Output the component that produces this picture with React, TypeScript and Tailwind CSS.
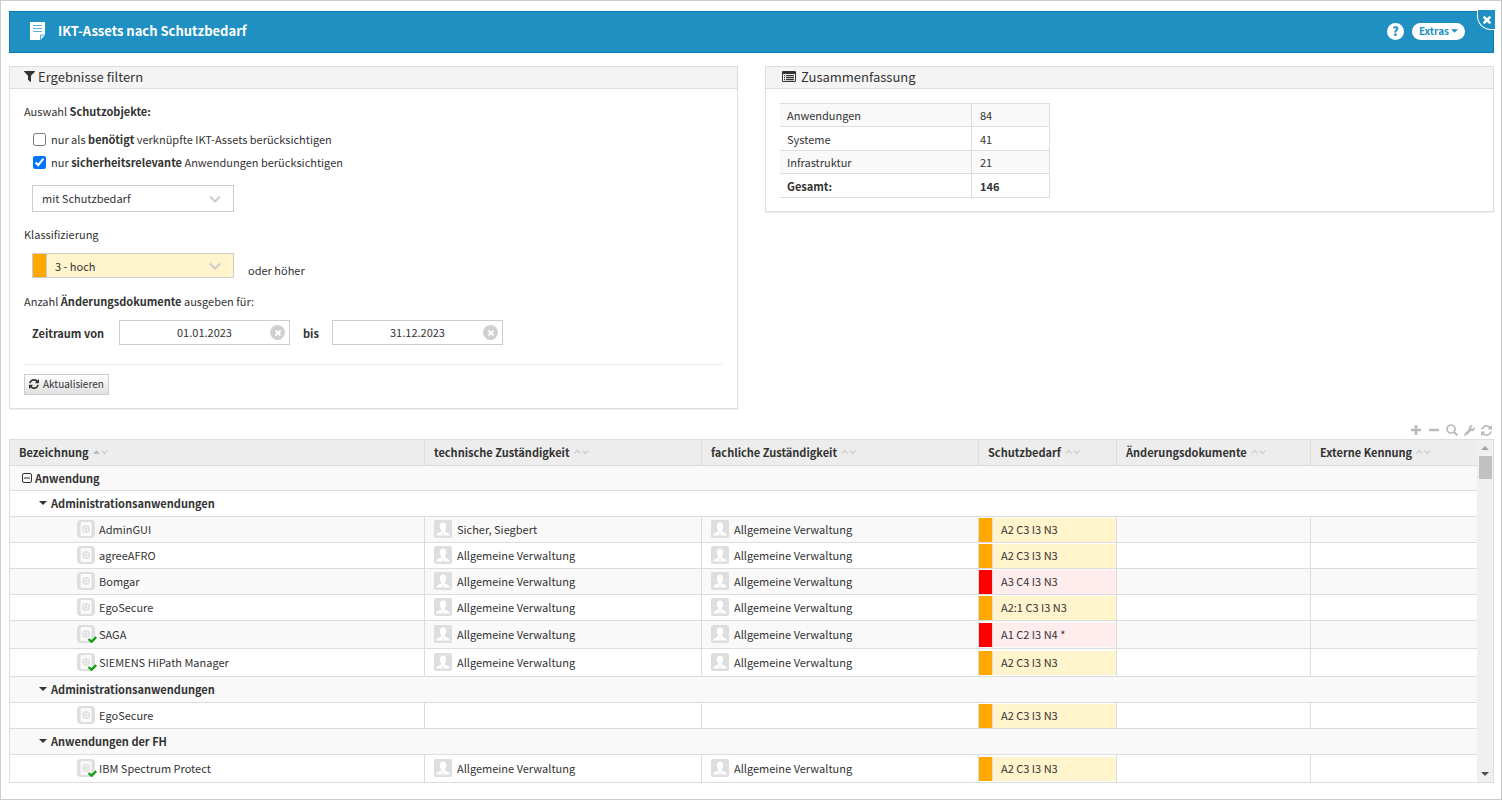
import React, { useState } from "react";
import { FaWrench } from "react-icons/fa";

type Level = "hoch" | "sehrHoch";

interface AssetRow {
  kind: "category" | "group" | "item";
  name: string;
  checked?: boolean;
  technical?: string;
  business?: string;
  need?: string;
  level?: Level;
}

const columns = [
  "Bezeichnung",
  "technische Zuständigkeit",
  "fachliche Zuständigkeit",
  "Schutzbedarf",
  "Änderungsdokumente",
  "Externe Kennung",
];

const AV = "Allgemeine Verwaltung";

const rows: AssetRow[] = [
  { kind: "category", name: "Anwendung" },
  { kind: "group", name: "Administrationsanwendungen" },
  { kind: "item", name: "AdminGUI", technical: "Sicher, Siegbert", business: AV, need: "A2 C3 I3 N3", level: "hoch" },
  { kind: "item", name: "agreeAFRO", technical: AV, business: AV, need: "A2 C3 I3 N3", level: "hoch" },
  { kind: "item", name: "Bomgar", technical: AV, business: AV, need: "A3 C4 I3 N3", level: "sehrHoch" },
  { kind: "item", name: "EgoSecure", technical: AV, business: AV, need: "A2:1 C3 I3 N3", level: "hoch" },
  { kind: "item", name: "SAGA", checked: true, technical: AV, business: AV, need: "A1 C2 I3 N4 *", level: "sehrHoch" },
  { kind: "item", name: "SIEMENS HiPath Manager", checked: true, technical: AV, business: AV, need: "A2 C3 I3 N3", level: "hoch" },
  { kind: "group", name: "Administrationsanwendungen" },
  { kind: "item", name: "EgoSecure", need: "A2 C3 I3 N3", level: "hoch" },
  { kind: "group", name: "Anwendungen der FH" },
  { kind: "item", name: "IBM Spectrum Protect", checked: true, technical: AV, business: AV, need: "A2 C3 I3 N3", level: "hoch" },
];

const summary = [
  ["Anwendungen", "84"],
  ["Systeme", "41"],
  ["Infrastruktur", "21"],
];

interface IconProps {
  className?: string;
}

const PLUS =
  "M1408 608v192q0 40-28 68t-68 28H896v416q0 40-28 68t-68 28H608q-40 0-68-28t-28-68V896H96q-40 0-68-28T0 800V608q0-40 28-68t68-28h416V96q0-40 28-68t68-28h192q40 0 68 28t28 68v416h416q40 0 68 28t28 68z";

const PlusIcon: React.FC<IconProps> = ({ className }) => (
  <svg viewBox="0 0 1408 1408" fill="currentColor" className={className}>
    <path d={PLUS} />
  </svg>
);

const CloseIcon: React.FC<IconProps> = ({ className }) => (
  <svg viewBox="110 110 1188 1188" fill="currentColor" className={className}>
    <path d={PLUS} transform="rotate(45 704 704)" />
  </svg>
);

const MinusIcon: React.FC<IconProps> = ({ className }) => (
  <svg viewBox="0 0 1408 1408" fill="currentColor" className={className}>
    <rect y="512" width="1408" height="384" rx="96" />
  </svg>
);

const RefreshIcon: React.FC<IconProps> = ({ className }) => (
  <svg viewBox="0 0 1536 1536" fill="currentColor" className={className}>
    <path d="M1511 928q0 5-1 7-64 268-268 434.500t-478 166.500q-146 0-282.500-55t-243.500-157l-129 129q-19 19-45 19t-45-19-19-45v-448q0-26 19-45t45-19h448q26 0 45 19t19 45-19 45l-137 137q71 66 161 102t187 36q134 0 250-65t186-179q11-17 53-117 8-23 30-23h192q13 0 22.500 9.500t9.500 22.500zm25-800v448q0 26-19 45t-45 19h-448q-26 0-45-19t-19-45 19-45l138-138q-148-137-349-137-134 0-250 65t-186 179q-11 17-53 117-8 23-30 23h-199q-13 0-22.500-9.500t-9.500-22.500v-7q65-268 270-434.500t480-166.500q146 0 284 55.500t245 156.500l130-129q19-19 45-19t45 19 19 45z" />
  </svg>
);

const SearchIcon: React.FC<IconProps> = ({ className }) => (
  <svg viewBox="0 0 12 12" fill="none" stroke="currentColor" strokeLinecap="round" className={className}>
    <circle cx="5" cy="5" r="4" strokeWidth="1.7" />
    <path d="M8.200 8.200l2.600 2.600" strokeWidth="2.200" />
  </svg>
);

const FilterIcon: React.FC<IconProps> = ({ className }) => (
  <svg viewBox="0 0 1408 1408" fill="currentColor" className={className}>
    <path d="M1403 39q17 41-14 70L896 602v742q0 42-39 59-13 5-25 5-27 0-45-19l-256-256q-19-19-19-45V602L19 109Q-12 80 5 39 22 0 64 0h1280q42 0 59 39z" />
  </svg>
);

const ListIcon: React.FC<IconProps> = ({ className }) => (
  <svg viewBox="0 0 14 11" fill="currentColor" className={className}>
    <path fillRule="evenodd" d="M1.200 0h11.600Q14 0 14 1.200v8.600q0 1.200-1.200 1.200H1.200Q0 11 0 9.800V1.200Q0 0 1.200 0zM1 3v6.700q0 .3.300.3h11.400q.3 0 .3-.3V3z" />
    <path d="M2 4h1v1.200H2zM2 6h1v1.200H2zM2 8h1v1.200H2zM4 4h8v1.200H4zM4 6h8v1.200H4zM4 8h8v1.200H4z" />
  </svg>
);

const NoteIcon: React.FC<IconProps> = ({ className }) => (
  <svg viewBox="0 0 15 18" className={className}>
    <path d="M0 0h15v12.500L10 18H0z" fill="#fff" />
    <path d="M3 3.500h9M3 6.500h9M3 9.500h9" stroke="#5fb0d6" />
    <path d="M15 13h-4.500v5" fill="#e3f1f8" stroke="#5fb0d6" />
  </svg>
);

const ChevronIcon: React.FC<IconProps> = ({ className }) => (
  <svg viewBox="0 0 12 8" fill="none" stroke="currentColor" strokeWidth="2" className={className}>
    <path d="M1 1.500l5 5 5-5" />
  </svg>
);

const CaretIcon: React.FC<IconProps> = ({ className }) => (
  <svg viewBox="0 0 8 4" fill="currentColor" className={className}>
    <path d="M0 0h8L4 4z" />
  </svg>
);

const CollapseIcon: React.FC<IconProps> = ({ className }) => (
  <svg viewBox="0 0 10 10" fill="none" stroke="currentColor" className={className}>
    <rect x="0.500" y="0.500" width="9" height="9" rx="1.500" />
    <path d="M2 5h6" />
  </svg>
);

const SortIcon: React.FC<{ active: boolean }> = ({ active }) => (
  <svg viewBox="0 0 15 6" fill="none" stroke="#cfcfcf" strokeWidth="1.300" className="h-1.5 w-[15px]">
    {active ? <path d="M0 5l3.500-4L7 5z" fill="#bbb" stroke="none" /> : <path d="M.5 4.500l3-3 3 3" />}
    <path d="M8.500 1.500l3 3 3-3" />
  </svg>
);

const AssetIcon: React.FC<{ checked?: boolean }> = ({ checked }) => (
  <svg viewBox="0 0 20 18" className="h-[18px] w-5 shrink-0">
    <rect width="18" height="18" rx="4" fill="#dedede" />
    <rect x="3.500" y="2" width="11" height="14" rx="1.500" fill="#fafafa" />
    <circle cx="9" cy="9" r="4" fill="#e2e2e2" />
    <circle cx="9" cy="9" r="2" fill="#dedede" stroke="#f6f6f6" />
    {checked && <path d="M11.500 14l3 2.700 4.800-4.500" fill="none" stroke="#12a012" strokeWidth="2.300" />}
  </svg>
);

const PersonIcon: React.FC = () => (
  <svg viewBox="0 0 18 18" className="size-[18px] shrink-0">
    <rect width="18" height="18" rx="2" fill="#dedede" />
    <ellipse cx="9" cy="6.500" rx="3.200" ry="4" fill="#fff" />
    <path d="M7.400 9.500h3.200v1.600q.2.900 2.400 1.500 2.600.7 2.800 2.900H2.200q.2-2.200 2.800-2.900 2.200-.6 2.400-1.500z" fill="#fff" />
    <path d="M9 11l-.7 4.500h1.400z" fill="#dedede" />
  </svg>
);

const Panel: React.FC<{ title: string; icon: React.ReactNode; children: React.ReactNode }> = ({ title, icon, children }) => (
  <section className="border border-[#ddd] bg-white shadow-[0_1px_1px_rgba(0,0,0,0.05)]">
    <h2 className="flex h-[22px] items-center border-b border-[#ddd] bg-[#f4f4f4] px-3.5 pb-0.5 text-[13px]">
      {icon}
      {title}
    </h2>
    {children}
  </section>
);

const DateField: React.FC<{ id: string; initial: string }> = ({ id, initial }) => {
  const [value, setValue] = useState(initial);
  return (
    <div className="relative">
      <input
        id={id}
        type="text"
        value={value}
        onChange={(e) => setValue(e.target.value)}
        className="h-[25px] w-[171px] border border-[#ccc] bg-white pb-0.5 text-center outline-none"
      />
      <button
        type="button"
        aria-label="Leeren"
        onClick={() => setValue("")}
        className="absolute top-[5px] right-[5px] flex size-[15px] items-center justify-center rounded-full bg-[#d0d0d0] text-white"
      >
        <CloseIcon className="size-1.5" />
      </button>
    </div>
  );
};

const Responsible: React.FC<{ name?: string }> = ({ name }) => (
  <td className="border-r border-b border-[#ddd] px-[9px] pb-0.5">
    {name && (
      <div className="flex items-center gap-[5px]">
        <PersonIcon />
        {name}
      </div>
    )}
  </td>
);

const AssetTableRow: React.FC<{ row: AssetRow }> = ({ row }) => {
  if (row.kind === "category") {
    return (
      <tr className="h-[25px] odd:bg-[#f9f9f9]">
        <th colSpan={6} scope="colgroup" className="border-b border-[#ddd] pb-px pl-3 text-left">
          <div className="flex items-center gap-[3px]">
            <CollapseIcon className="size-2.5" />
            {row.name}
          </div>
        </th>
      </tr>
    );
  }
  if (row.kind === "group") {
    return (
      <tr className="h-[26px] odd:bg-[#f9f9f9]">
        <th colSpan={6} scope="colgroup" className="border-b border-[#ddd] pb-px pl-[29px] text-left">
          <div className="flex items-center gap-1">
            <CaretIcon className="h-1 w-2" />
            {row.name}
          </div>
        </th>
      </tr>
    );
  }
  const high = row.level === "hoch";
  return (
    <tr className={row.checked ? "h-7 odd:bg-[#f9f9f9]" : "h-[26px] odd:bg-[#f9f9f9]"}>
      <td className="border-r border-b border-[#ddd] pb-0.5 pl-[67px]">
        <div className="flex items-center gap-0.5">
          <AssetIcon checked={row.checked} />
          {row.name}
        </div>
      </td>
      <Responsible name={row.technical} />
      <Responsible name={row.business} />
      <td className="border-r border-b border-[#ddd]">
        <div className={high ? "flex h-6 bg-[#fff4cc]" : "flex h-6 bg-[#ffeded]"}>
          <span className={high ? "mr-2 h-6 w-3.5 border-r border-[#ddd] bg-[#ffa800]" : "mr-2 h-6 w-3.5 border-r border-[#ddd] bg-[#f00]"} />
          <span className="pt-0.5">{row.need}</span>
        </div>
      </td>
      <td className="border-r border-b border-[#ddd]"></td>
      <td className="border-b border-[#ddd]"></td>
    </tr>
  );
};

const App: React.FC = () => {
  const [required, setRequired] = useState(false);
  const [relevant, setRelevant] = useState(true);

  return (
    <div className="min-h-screen border border-[#ccc] bg-white pt-2.5 pr-[7px] pb-4 pl-2 font-['Noto_Sans_CJK_SC',sans-serif] text-[11px] leading-[18px] text-[#333]">
      <header className="relative flex h-[42px] items-center border border-[#0b7bb0] bg-[#2090c2] pb-0.5 pl-5 text-white">
        <NoteIcon className="h-[18px] w-[15px]" />
        <h1 className="ml-[13px] text-[13px] font-bold">IKT-Assets nach Schutzbedarf</h1>
        <button type="button" className="ml-auto flex size-[17px] items-center justify-center rounded-full bg-white text-[12px] font-black text-[#2090c2]">
          ?
        </button>
        <button type="button" className="mr-7 ml-2 flex h-[17px] items-center gap-0.5 rounded-full bg-white px-[7px] pb-px text-[10px] font-bold text-[#2090c2]">
          Extras
          <CaretIcon className="h-1 w-[7px]" />
        </button>
        <button
          type="button"
          aria-label="Schließen"
          className="absolute -top-0.5 -right-0.5 flex h-5 w-[18px] items-center justify-center rounded-bl-[14px] border-b border-l border-white bg-[#2090c2] text-white"
        >
          <CloseIcon className="size-2" />
        </button>
      </header>

      <div className="mt-[13px] grid grid-cols-2 items-start gap-[27px]">
        <Panel title="Ergebnisse filtern" icon={<FilterIcon className="mr-[3px] size-[11px]" />}>
          <form className="px-3.5 py-[13px]" onSubmit={(e) => e.preventDefault()}>
            <p>
              Auswahl <b>Schutzobjekte:</b>
            </p>
            <label className="mt-[10px] ml-[9px] flex items-center gap-[5px]">
              <input type="checkbox" className="size-[13px]" checked={required} onChange={(e) => setRequired(e.target.checked)} />
              <span className="pb-px">
                nur als <b>benötigt</b> verknüpfte IKT-Assets berücksichtigen
              </span>
            </label>
            <label className="mt-1 ml-[9px] flex items-center gap-[5px]">
              <input type="checkbox" className="size-[13px]" checked={relevant} onChange={(e) => setRelevant(e.target.checked)} />
              <span className="pb-px">
                nur <b>sicherheitsrelevante</b> Anwendungen berücksichtigen
              </span>
            </label>
            <div className="relative mt-[13px] ml-2 w-[202px]">
              <select aria-label="Schutzbedarf" className="block h-[27px] w-full appearance-none border border-[#ccc] bg-white pb-0.5 pl-[9px] outline-none">
                <option>mit Schutzbedarf</option>
                <option>ohne Schutzbedarf</option>
              </select>
              <ChevronIcon className="pointer-events-none absolute top-2.5 right-[13px] h-2 w-3 text-[#ccc]" />
            </div>
            <label htmlFor="klasse" className="mt-[13px] block">
              Klassifizierung
            </label>
            <div className="mt-[10px] ml-2 flex items-end">
              <div className="relative w-[202px]">
                <select id="klasse" className="block h-[25px] w-full appearance-none border border-[#ccc] bg-[#fff4cc] pl-[22px] outline-none">
                  <option>3 - hoch</option>
                  <option>4 - sehr hoch</option>
                </select>
                <span className="absolute top-px left-px h-[23px] w-3.5 border-r border-[#ccc] bg-[#ffa800]" />
                <ChevronIcon className="pointer-events-none absolute top-[9px] right-[13px] h-2 w-3 text-[#ccc]" />
              </div>
              <span className="-mb-px ml-3.5">oder höher</span>
            </div>
            <p className="mt-[14px]">
              Anzahl <b>Änderungsdokumente</b> ausgeben für:
            </p>
            <div className="mt-[10px] ml-2 flex items-center">
              <label htmlFor="von" className="w-[87px] font-bold">
                Zeitraum von
              </label>
              <DateField id="von" initial="01.01.2023" />
              <label htmlFor="bis" className="w-[42px] pl-[13px] font-bold">
                bis
              </label>
              <DateField id="bis" initial="31.12.2023" />
            </div>
            <hr className="mt-[19px] border-[#eee]" />
            <button
              type="submit"
              className="mt-[9px] flex h-[21px] items-center gap-1 border border-[#ccc] bg-linear-to-b from-white to-[#e0e0e0] px-1 pb-px text-[10px]"
            >
              <RefreshIcon className="size-2.5" />
              Aktualisieren
            </button>
          </form>
        </Panel>

        <Panel title="Zusammenfassung" icon={<ListIcon className="mr-[5px] ml-0.5 h-[11px] w-3.5" />}>
          <table className="mt-3.5 mb-[13px] ml-3.5 w-[270px] border-separate border-spacing-0 border-t border-[#ddd]">
            <tbody>
              {summary.map(([label, count]) => (
                <tr key={label} className="h-6 odd:h-[23px] odd:bg-[#f9f9f9]">
                  <th scope="row" className="border-r border-b border-[#ddd] pl-[7px] text-left font-normal">
                    {label}
                  </th>
                  <td className="w-[78px] border-r border-b border-[#ddd] pl-2">{count}</td>
                </tr>
              ))}
              <tr className="h-6 font-bold">
                <th scope="row" className="border-r border-b border-[#ddd] pl-[7px] text-left">
                  Gesamt:
                </th>
                <td className="border-r border-b border-[#ddd] pl-2">146</td>
              </tr>
            </tbody>
          </table>
        </Panel>
      </div>

      <div className="mt-[15px] flex items-center justify-end gap-1.5 pr-0.5 pb-[3px] text-[#bbb]">
        <button type="button" aria-label="Alle aufklappen" className="p-px">
          <PlusIcon className="size-2.5" />
        </button>
        <button type="button" aria-label="Alle zuklappen" className="p-px">
          <MinusIcon className="size-2.5" />
        </button>
        <button type="button" aria-label="Suchen">
          <SearchIcon className="size-3" />
        </button>
        <button type="button" aria-label="Einstellungen">
          <FaWrench className="size-[11px]" />
        </button>
        <button type="button" aria-label="Neu laden">
          <RefreshIcon className="size-[11px]" />
        </button>
      </div>

      <div className="flex border border-b-0 border-[#ddd]">
        <table className="min-w-0 flex-1 table-fixed border-separate border-spacing-0">
          <colgroup>
            <col />
            <col className="w-[277px]" />
            <col className="w-[277px]" />
            <col className="w-[138px]" />
            <col className="w-[194px]" />
            <col className="w-[166px]" />
          </colgroup>
          <thead>
            <tr className="h-[26px] bg-[#ededed]">
              {columns.map((name, i) => (
                <th key={name} scope="col" className="border-r border-b border-[#ddd] px-[9px] pb-px text-left last:border-r-0">
                  <div className="flex items-center gap-1">
                    {name}
                    <SortIcon active={i === 0} />
                  </div>
                </th>
              ))}
            </tr>
          </thead>
          <tbody>
            {rows.map((row, i) => (
              <AssetTableRow key={i} row={row} />
            ))}
          </tbody>
        </table>
        <div className="flex w-4 flex-col items-center justify-between border-b border-[#ddd] bg-[#f0f0f0]">
          <div className="flex flex-col items-center">
            <button type="button" aria-label="Nach oben" className="flex size-4 items-center justify-center text-[#a3a3a3]">
              <CaretIcon className="h-1 w-2 rotate-180" />
            </button>
            <div className="h-[23px] w-[13px] bg-[#c1c1c1]" />
          </div>
          <button type="button" aria-label="Nach unten" className="flex size-4 items-center justify-center text-[#505050]">
            <CaretIcon className="h-1 w-2" />
          </button>
        </div>
      </div>
    </div>
  );
};

export default App;
